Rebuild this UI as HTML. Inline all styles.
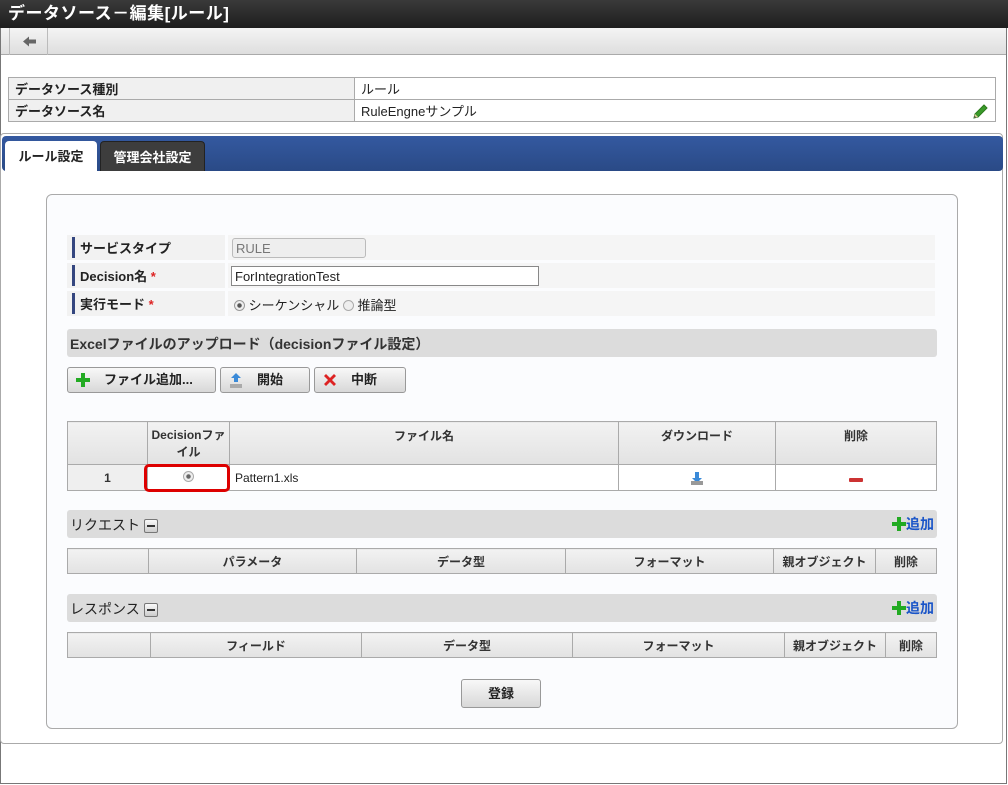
<!DOCTYPE html>
<html><head><meta charset="utf-8"><style>
*{box-sizing:border-box;margin:0;padding:0}
body{width:1008px;height:785px;position:relative;background:#fff;font-family:"Liberation Sans","Noto Sans CJK JP",sans-serif;font-size:12px;color:#222;overflow:hidden}
.a{position:absolute}
.frame{left:0;top:0;width:1007px;height:784px;border:1px solid #777;border-top:none}
.title{left:0;top:0;width:1008px;height:28px;background:linear-gradient(#3a3a3a,#1e1e1e);color:#fff;font-size:17px;font-weight:bold;padding:0 8px;line-height:28px;letter-spacing:0.5px;overflow:hidden}
.tool{left:1px;top:28px;width:1005px;height:27px;background:linear-gradient(#f4f4f4,#dedede);border-bottom:1px solid #aaa}
.back{left:9px;top:28px;width:39px;height:27px;border-left:1px solid #bbb;border-right:1px solid #bbb}
table{border-collapse:collapse;position:absolute}
td,th{border:1px solid #aaa}
.info td{height:22px;padding:0 6px;font-size:13px}
.info td.l{background:#f0f0f0;font-weight:bold;width:346px}
.panel{left:0;top:133px;width:1003px;height:611px;border:1px solid #aaa;border-radius:4px}
.tabbar{left:2px;top:136px;width:1001px;height:35px;background:linear-gradient(#3459a0,#2a4a86);border-radius:4px}
.tab{top:141px;height:30px;font-weight:bold;font-size:13px;text-align:center;line-height:31px;border-radius:4px 4px 0 0}
.box{left:46px;top:194px;width:912px;height:535px;border:1px solid #aaa;border-radius:6px;background:#fbfcfe}
.fl{left:67px;width:158px;height:25px;background:#f2f2f2;font-weight:bold;font-size:13px;padding:3px 0 0 13px}
.fl:before{content:"";position:absolute;left:5px;top:2px;width:3px;height:21px;background:#34467f}
.fv{left:228px;width:707px;height:25px;background:#f5f5f5}
.req{color:#d22}
.sec{left:67px;width:870px;height:28px;background:#dcdcdc;border-radius:3px;font-size:14px;padding:5px 3px}
.btn{top:367px;height:26px;border:1px solid #999;border-radius:3px;background:linear-gradient(#f8f8f8,#d8d8d8);font-weight:bold;font-size:13px;line-height:24px}
.g th{background:linear-gradient(#f2f2f2,#e2e2e2);font-size:12px;font-weight:bold;color:#333}
.g td{background:#fff}
.add{color:#1a55c8;font-weight:bold;font-size:14px;right:74px}
.mini{display:inline-block;width:14px;height:14px;border:1px solid #777;border-radius:2px;background:linear-gradient(#fafafa,#ccc);vertical-align:middle;position:relative;margin-left:4px}
.mini:after{content:"";position:absolute;left:2px;top:5px;width:8px;height:2px;background:#333}
</style></head><body>
<div class="a frame"></div>
<div class="a title">データソース－編集[ルール]</div>
<div class="a tool"></div>
<div class="a back"><svg width="39" height="27"><path d="M13 13.5 L19 8.5 V11.5 H26 V15.5 H19 V18.5 Z" fill="#666"/></svg></div>
<table class="info" style="left:8px;top:77px;width:988px">
<tr><td class="l">データソース種別</td><td>ルール</td></tr>
<tr><td class="l">データソース名</td><td style="position:relative">RuleEngneサンプル<svg style="position:absolute;right:6px;top:2px" width="18" height="18"><path d="M3 16 L4 12 L13 3 L16 6 L7 15 Z" fill="#3a9a2a" stroke="#2a7a1a"/><path d="M3 16 L4 12 L7 15 Z" fill="#e8d0a0"/><path d="M3 16 L3.7 14 L5 15.3Z" fill="#333"/></svg></td></tr>
</table>
<div class="a panel"></div>
<div class="a tabbar"></div>
<div class="a tab" style="left:5px;width:92px;background:#fff;color:#222">ルール設定</div>
<div class="a tab" style="left:100px;width:105px;background:#3d3d3d;color:#fff;border:1px solid #222;border-bottom:none">管理会社設定</div>
<div class="a box"></div>
<div class="a fl" style="top:235px">サービスタイプ</div><div class="a fv" style="top:235px"><div class="a" style="left:4px;top:3px;width:134px;height:20px;border:1px solid #bbb;border-radius:3px;background:#eee;color:#777;padding:2px 3px;font-size:13px">RULE</div></div>
<div class="a fl" style="top:263px">Decision名 <span class="req">*</span></div><div class="a fv" style="top:263px"><div class="a" style="left:3px;top:3px;width:308px;height:20px;border:1px solid #888;background:#fff;padding:2px 3px;font-size:13px">ForIntegrationTest</div></div>
<div class="a fl" style="top:291px">実行モード <span class="req">*</span></div><div class="a fv" style="top:291px;font-size:13px;padding:4px 6px"><span style="display:inline-block;width:11px;height:11px;border:1px solid #999;border-radius:50%;background:radial-gradient(#555 30%,#eee 40%);vertical-align:-1px"></span> シーケンシャル <span style="display:inline-block;width:11px;height:11px;border:1px solid #aaa;border-radius:50%;background:#eee;vertical-align:-1px"></span> 推論型</div>
<div class="a sec" style="top:329px;font-weight:bold;color:#333">Excelファイルのアップロード（decisionファイル設定）</div>
<div class="a btn" style="left:67px;width:149px"><svg class="a" style="left:8px;top:5px" width="14" height="14"><path d="M5 0H9V5H14V9H9V14H5V9H0V5H5Z" fill="#2a2"/></svg><span style="position:absolute;left:36px">ファイル追加...</span></div>
<div class="a btn" style="left:220px;width:90px"><svg class="a" style="left:7px;top:4px" width="16" height="17"><path d="M8 1 L13 6 H10 V10 H6 V6 H3 Z" fill="#3a8ad8"/><rect x="2" y="12" width="12" height="4" fill="#aaa"/></svg><span style="position:absolute;left:36px">開始</span></div>
<div class="a btn" style="left:314px;width:92px"><svg class="a" style="left:8px;top:5px" width="14" height="14"><path d="M1 3L3 1L7 5L11 1L13 3L9 7L13 11L11 13L7 9L3 13L1 11L5 7Z" fill="#d22"/></svg><span style="position:absolute;left:36px">中断</span></div>
<table class="g" style="left:67px;top:421px;width:870px">
<tr style="height:43px"><th style="width:80px"></th><th style="width:82px;vertical-align:top;padding-top:5px;line-height:17px">Decisionファイル</th><th style="width:389px;vertical-align:top;padding-top:5px">ファイル名</th><th style="width:157px;vertical-align:top;padding-top:5px">ダウンロード</th><th style="vertical-align:top;padding-top:5px">削除</th></tr>
<tr style="height:26px"><th style="background:#efefef">1</th><td style="text-align:center;position:relative"><span style="display:inline-block;width:11px;height:11px;border:1px solid #aaa;border-radius:50%;background:radial-gradient(#666 30%,#eee 40%)"></span><div class="a" style="left:-4px;top:-1px;width:86px;height:28px;border:3px solid #d00;border-radius:5px"></div></td><td style="padding-left:5px">Pattern1.xls</td><td style="text-align:center"><svg width="14" height="16" style="vertical-align:middle"><path d="M7 13 L12 8 H9 V2 H5 V8 H2 Z" fill="#3a8ad8"/><rect x="1" y="11" width="12" height="4" fill="#999"/></svg></td><td style="text-align:center"><span style="display:inline-block;width:14px;height:4px;background:#c33;border-radius:1px"></span></td></tr>
</table>
<div class="a sec" style="top:510px">リクエスト<span class="mini"></span></div>
<div class="a add" style="top:514px;right:74px"><svg width="14" height="14" style="vertical-align:-2px"><path d="M5 0H9V5H14V9H9V14H5V9H0V5H5Z" fill="#2a2"/></svg>追加</div>
<table class="g" style="left:67px;top:548px;width:870px"><tr style="height:25px"><th style="width:81px"></th><th style="width:208px">パラメータ</th><th style="width:209px">データ型</th><th style="width:208px">フォーマット</th><th style="width:102px">親オブジェクト</th><th>削除</th></tr></table>
<div class="a sec" style="top:594px">レスポンス<span class="mini"></span></div>
<div class="a add" style="top:598px;right:74px"><svg width="14" height="14" style="vertical-align:-2px"><path d="M5 0H9V5H14V9H9V14H5V9H0V5H5Z" fill="#2a2"/></svg>追加</div>
<table class="g" style="left:67px;top:632px;width:870px"><tr style="height:25px"><th style="width:83px"></th><th style="width:211px">フィールド</th><th style="width:211px">データ型</th><th style="width:212px">フォーマット</th><th style="width:101px">親オブジェクト</th><th>削除</th></tr></table>
<div class="a btn" style="left:461px;top:679px;width:80px;height:29px;text-align:center;line-height:27px">登録</div>
</body></html>
